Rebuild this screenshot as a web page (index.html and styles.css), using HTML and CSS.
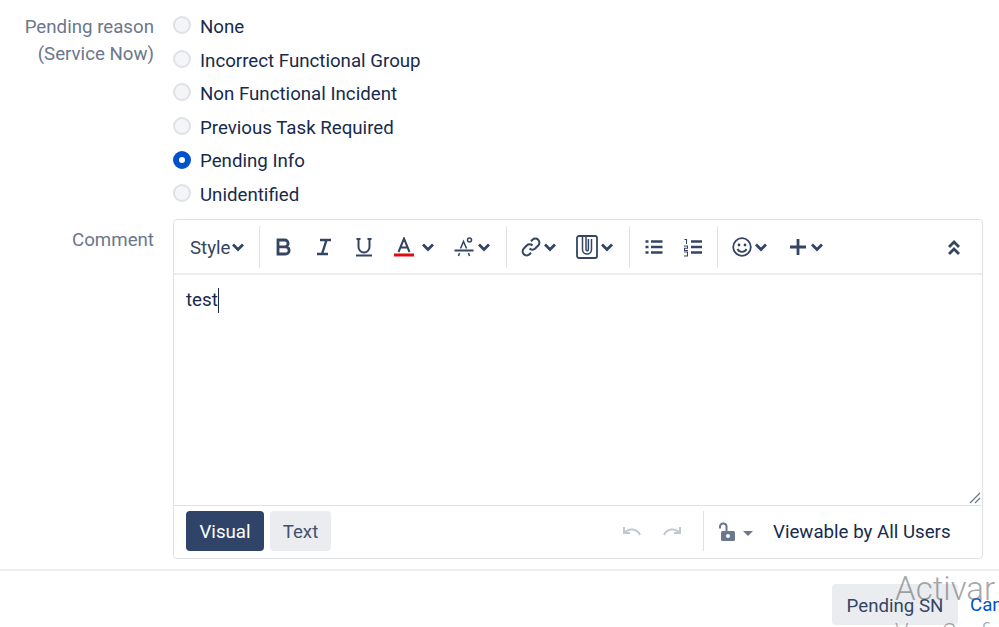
FILE: index.html
```html
<html>
<head>
    <meta charset="utf-8">
    <title>Pending SN</title>
    <link rel="stylesheet" href="styles.css">
</head>
<body>

<div class="form">
  <div class="row">
    <div class="label">Pending reason<br>(Service Now)</div>
    <div class="radios">
      <div class="radio"><span class="dot"></span>None</div>
      <div class="radio"><span class="dot"></span>Incorrect Functional Group</div>
      <div class="radio"><span class="dot"></span>Non Functional Incident</div>
      <div class="radio"><span class="dot"></span>Previous Task Required</div>
      <div class="radio"><span class="dot checked"></span>Pending Info</div>
      <div class="radio"><span class="dot"></span>Unidentified</div>
    </div>
  </div>

  <div class="row comment-row">
    <div class="label">Comment</div>
    <div class="editor">
      <div class="toolbar">
        <div class="group group-style">
          <div class="tool tight"><span class="style-name">Style</span>
            <svg class="chev" viewBox="0 0 12 12"><path d="M1 3.500l5 5 5-5"/></svg>
          </div>
        </div>

        <div class="group group-format">
          <svg class="icon" viewBox="0 0 20 20"><path class="thick" d="M4 3h6.700a3.400 3.400 0 0 1 0 6.800H4zM4 9.800h7.500a3.600 3.600 0 0 1 0 7.200H4zM4 2v16"/></svg>
          <svg class="icon" viewBox="0 0 20 20"><path class="thick-ish" d="M6 3h11M3 17h11M12.500 3L8 17"/></svg>
          <svg class="icon" viewBox="0 0 20 20"><path d="M4.500 2v8a5.500 5.500 0 0 0 11 0V2M2 18.500h16"/><path d="M2.500 2h4M13.500 2h4"/></svg>
          <div class="tool colour">
            <svg class="icon" viewBox="0 0 20 20"><path d="M4.500 15L10 1.500 15.500 15M6.300 10.500h7.400"/><rect class="red" x="0" y="16.500" width="20" height="3"/></svg>
            <svg class="chev" viewBox="0 0 12 12"><path d="M1 3.500l5 5 5-5"/></svg>
          </div>
          <div class="tool more">
            <svg class="icon" viewBox="0 0 20 20"><path d="M0.500 13.500h19"/><path class="thin" d="M4.500 19l1-3M15.500 19l-1-3M6.500 11.500l3-7 3 7"/><circle class="thin" cx="15.500" cy="3" r="2"/></svg>
            <svg class="chev" viewBox="0 0 12 12"><path d="M1 3.500l5 5 5-5"/></svg>
          </div>
        </div>

        <div class="group group-insert">
          <div class="tool">
            <svg class="icon" viewBox="0 0 20 20"><path d="M8.500 11.500a4 4 0 0 0 5.700 0l3-3a4 4 0 0 0-5.700-5.700l-1.500 1.500M11.500 8.500a4 4 0 0 0-5.700 0l-3 3a4 4 0 0 0 5.700 5.700l1.500-1.500"/></svg>
            <svg class="chev" viewBox="0 0 12 12"><path d="M1 3.500l5 5 5-5"/></svg>
          </div>
          <div class="tool">
            <svg class="icon wide" viewBox="0 0 22 24"><rect class="mid" x="1" y="1" width="20" height="22" rx="2"/><path class="thin" d="M6.500 1v13.500a4.500 4.500 0 0 0 9 0V4M10 1v13.500a1.200 1.200 0 0 0 2.400 0V4"/></svg>
            <svg class="chev" viewBox="0 0 12 12"><path d="M1 3.500l5 5 5-5"/></svg>
          </div>
        </div>

        <div class="group group-lists">
          <svg class="icon" viewBox="0 0 20 20"><path class="bar" d="M7 4.500h11.500M7 10h11.500M7 15.500h11.500"/><path class="bar" d="M1.500 4.500h3M1.500 10h3M1.500 15.500h3"/></svg>
          <svg class="icon" viewBox="0 0 20 20"><path class="num" d="M1.500 2.500h2v4.500M1 9h3.500v2.200h-3v2.300h3.500M1 15h3.500v4H1"/><path class="bar" d="M8 4.500h11M8 10h11M8 15.500h11"/></svg>
        </div>

        <div class="group group-extra">
          <div class="tool">
            <svg class="icon" viewBox="0 0 20 20"><circle class="mid" cx="10" cy="10" r="8.800"/><circle class="fill" cx="7" cy="8" r="1.400"/><circle class="fill" cx="13" cy="8" r="1.400"/><path class="mid" d="M5.500 12a5 5 0 0 0 9 0"/></svg>
            <svg class="chev" viewBox="0 0 12 12"><path d="M1 3.500l5 5 5-5"/></svg>
          </div>
          <div class="tool">
            <svg class="icon" viewBox="0 0 20 20"><path class="thick" d="M10 2v16M2 10h16"/></svg>
            <svg class="chev" viewBox="0 0 12 12"><path d="M1 3.500l5 5 5-5"/></svg>
          </div>
        </div>

        <svg class="collapse" viewBox="0 0 14 16"><path d="M2 7l5-5 5 5M2 14l5-5 5 5"/></svg>
      </div>

      <div class="body">
        <div class="typed"><span class="caret">test</span></div>
        <svg class="grip" viewBox="0 0 12 12"><path d="M1 11L11 1M6 11l5-5"/></svg>
      </div>

      <div class="footer">
        <button class="btn btn-primary">Visual</button>
        <button class="btn btn-text">Text</button>
        <div class="history">
          <svg class="undo" viewBox="0 0 20 12"><path d="M2 2v6h6M2.500 8a9 9 0 0 1 15.500 2"/></svg>
          <svg class="undo" viewBox="0 0 20 12"><path d="M18 2v6h-6M17.500 8a9 9 0 0 0-15.500 2"/></svg>
        </div>
        <div class="visibility">
          <svg class="lock" viewBox="0 0 18 20"><path class="shackle" d="M2 6.500V4.500a3.300 3.300 0 0 1 6.500-0.500V10"/><rect x="3" y="9" width="14" height="10" rx="1.500"/><circle cx="10" cy="14" r="2" fill="#fff"/></svg>
          <span class="caret-down"></span>
          <span class="viewable">Viewable by All Users</span>
        </div>
      </div>
    </div>
  </div>
</div>

<div class="actions">
  <button class="btn btn-text btn-submit">Pending SN</button>
  <a class="cancel">Cancel</a>
</div>

<div class="watermark">
  <div class="wm-big">Activar Windows</div>
  <div class="wm-small">Ve a Configuración</div>
</div>

</body>
</html>
```

FILE: styles.css
```css
* {
  margin: 0px;
  padding: 0px;
  box-sizing: border-box;
}
html, body {
  height: 627px;
  overflow: hidden;
  background-color: white;
}
body {
  position: relative;
  font-family: Roboto, "Noto Sans", sans-serif;
  font-size: 18.700px;
  color: #172b4d;
}
.form {
  padding-top: 10.700px;
  padding-right: 16px;
  height: 559px;
}
.row {
  display: flex;
}
.label {
  width: 154px;
  flex-shrink: 0;
  text-align: right;
  color: #6b778c;
  line-height: 27px;
  padding-top: 3.500px;
}
.radios {
  margin-left: 19px;
}
.radio {
  display: flex;
  align-items: center;
  height: 33.500px;
}
.dot {
  width: 18px;
  height: 18px;
  margin-right: 9px;
  margin-top: -4px;
  border-radius: 50%;
  background-color: #f4f5f7;
  border: 2px solid #dfe1e6;
}
.dot.checked {
  margin-top: -3px;
  background-color: white;
  border: 6px solid #0052cc;
}
.comment-row {
  margin-top: 7.700px;
}
.comment-row .label {
  padding-top: 7.500px;
}
.editor {
  margin-left: 19px;
  flex: 1;
  height: 340px;
  border: 1px solid #dfe1e6;
  border-radius: 4px;
  display: flex;
  flex-direction: column;
}
.toolbar {
  display: flex;
  align-items: center;
  height: 55px;
  border-bottom: 2px solid #ebecf0;
  flex-shrink: 0;
}
.group {
  display: flex;
  align-items: center;
  height: 42px;
  border-right: 1px solid #dfe1e6;
}
.group-style {
  width: 86px;
  padding-left: 16px;
}
.group-format {
  width: 247px;
  padding-left: 14px;
  gap: 20px;
}
.group-insert {
  width: 123px;
  padding-left: 14px;
  gap: 20px;
}
.group-lists {
  width: 88px;
  padding-left: 14px;
  gap: 19px;
}
.group-extra {
  padding-left: 14px;
  gap: 21px;
  border-right: none;
}
.tool {
  display: flex;
  align-items: center;
  gap: 3px;
}
.tool.tight {
  gap: 1px;
  color: #344563;
}
.style-name {
  padding-top: 2px;
}
.tool.colour {
  gap: 8px;
}
.tool.more {
  gap: 4px;
}
svg {
  display: block;
  flex-shrink: 0;
  fill: none;
  stroke: #344563;
  stroke-width: 2;
}
.icon {
  width: 20px;
  height: 20px;
}
.icon.wide {
  width: 22px;
  height: 24px;
}
.icon .thick {
  stroke-width: 2.800;
}
.icon .thick-ish {
  stroke-width: 2.400;
}
.icon .mid {
  stroke-width: 1.800;
}
.icon .thin {
  stroke-width: 1.500;
}
.icon .num {
  stroke-width: 1.100;
}
.icon .bar {
  stroke-width: 2.500;
}
.icon .red {
  fill: #de0b17;
  stroke: none;
}
.icon .fill {
  fill: #344563;
  stroke: none;
}
.chev {
  width: 12px;
  height: 12px;
  stroke-width: 2.800;
}
.collapse {
  width: 14px;
  height: 16px;
  margin-left: auto;
  margin-right: 21px;
  margin-top: 3px;
  stroke-width: 2.800;
}
.body {
  flex: 1;
  display: flex;
  flex-direction: column;
  padding: 12px 1px 1px 12px;
}
.typed {
  line-height: 25px;
  padding-top: 1px;
}
.caret {
  border-right: 1px solid #172b4d;
  display: inline-block;
}
.grip {
  width: 12px;
  height: 12px;
  margin-left: auto;
  margin-top: auto;
  stroke: #6b778c;
  stroke-width: 1.300;
}
.footer {
  display: flex;
  align-items: center;
  height: 53px;
  border-top: 1px solid #dfe1e6;
  padding-left: 12px;
  padding-bottom: 2px;
  flex-shrink: 0;
}
.btn {
  border: none;
  border-radius: 4px;
  height: 40px;
  padding-top: 2px;
  font-family: inherit;
  font-size: 18.700px;
}
.btn-primary {
  width: 78px;
  background-color: #2f4468;
  color: white;
}
.btn-text {
  width: 61px;
  margin-left: 6px;
  background-color: #ebecf0;
  color: #42526e;
}
.history {
  display: flex;
  gap: 20px;
  margin-left: auto;
  padding-right: 21px;
  height: 40px;
  align-items: center;
  border-right: 1px solid #dfe1e6;
}
.undo {
  width: 20px;
  height: 12px;
  stroke: #c1c7d0;
}
.visibility {
  display: flex;
  align-items: center;
  width: 278px;
  padding-left: 14px;
  padding-top: 2px;
}
.lock {
  width: 18px;
  height: 20px;
  fill: #6b778c;
  stroke: none;
}
.lock .shackle {
  fill: none;
  stroke: #6b778c;
  stroke-width: 2;
}
.caret-down {
  width: 0;
  height: 0;
  margin-left: 7px;
  margin-top: 3px;
  border-left: 5px solid transparent;
  border-right: 5px solid transparent;
  border-top: 5px solid #6b778c;
}
.viewable {
  margin-left: 20px;
}
.actions {
  margin-top: 10px;
  border-top: 2px solid #ebecf0;
  padding-top: 13px;
  display: flex;
  align-items: center;
  padding-left: 832px;
  white-space: nowrap;
}
.btn-submit {
  width: 126px;
  height: 41px;
  margin-left: 0px;
  flex-shrink: 0;
  color: #344563;
}
.cancel {
  margin-left: 12px;
  color: #0052cc;
}
.watermark {
  position: absolute;
  left: 895px;
  top: 561px;
  white-space: nowrap;
  color: rgba(90, 90, 90, 0.550);
  font-weight: 300;
}
.wm-big {
  font-size: 33px;
  line-height: 56px;
}
.wm-small {
  font-size: 22px;
  line-height: 30px;
}
```
